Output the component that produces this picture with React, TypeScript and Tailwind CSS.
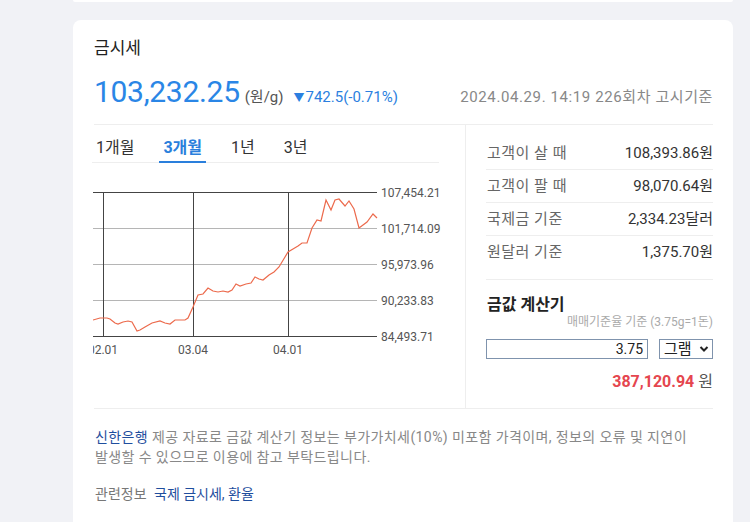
import React from "react";

const pts: [number, number][] = [
  [93, 319], [100, 317], [107, 317], [110, 318], [115, 322], [118, 323], [123, 321], [128, 320],
  [132, 321], [137, 330], [140, 329], [145, 326], [152, 322], [160, 320], [165, 322], [170, 323],
  [175, 319], [180, 319], [185, 319], [188, 317], [193, 306], [198, 294], [203, 293], [208, 287],
  [213, 290], [218, 291], [223, 290], [228, 291], [232, 289], [236, 283], [240, 285], [246, 283],
  [251, 282], [255, 276], [259, 278], [263, 279], [269, 274], [274, 271], [279, 266], [288, 251],
  [293, 248], [298, 245], [302, 242], [307, 242], [312, 227], [317, 219], [321, 220], [326, 199],
  [331, 209], [335, 199], [339, 198], [345, 205], [349, 200], [354, 208], [359, 227], [367, 221],
  [373, 213], [377, 217],
];

const rows = [
  { label: "고객이 살 때", value: "108,393.86원" },
  { label: "고객이 팔 때", value: "98,070.64원" },
  { label: "국제금 기준", value: "2,334.23달러" },
  { label: "원달러 기준", value: "1,375.70원" },
];

const gridY = [11, 47, 83, 119, 155];
const gridLabels = ["107,454.21", "101,714.09", "95,973.96", "90,233.83", "84,493.71"];
const xTicks = [
  { x: 10, label: "02.01" },
  { x: 100, label: "03.04" },
  { x: 195, label: "04.01" },
];

const Chart = () => {
  const line = pts.map(([x, y]) => `${x - 93},${y - 180}`).join(" ");
  return (
    <svg width="373" height="180" className="block mt-[18px] ml-[-1px]" style={{ overflow: "hidden" }}>
      {gridY.map((y, i) => (
        <line
          key={y}
          x1="0"
          x2="284"
          y1={y + 0.5}
          y2={y + 0.5}
          stroke={i === 0 || i === 4 ? "#444" : "#b5b5b5"}
          strokeWidth="1"
        />
      ))}
      {xTicks.map((t) => (
        <line key={t.x} x1={t.x + 0.5} x2={t.x + 0.5} y1="11" y2="155" stroke="#444" strokeWidth="1" />
      ))}
      <polyline points={line} fill="none" stroke="#ec6a4c" strokeWidth="1.2" />
      {gridLabels.map((l, i) => (
        <text key={l} x="288" y={gridY[i] + 4.5} fontSize="12" fill="#555" fontFamily="Roboto, sans-serif">
          {l}
        </text>
      ))}
      {xTicks.map((t) => (
        <text key={t.label} x={t.x} y="173" fontSize="12" fill="#555" textAnchor="middle" fontFamily="Roboto, sans-serif">
          {t.label}
        </text>
      ))}
    </svg>
  );
};

export default function App() {
  return (
    <div
      className="w-[750px] h-[522px] overflow-hidden bg-[#f1f2f6]"
      style={{ fontFamily: 'Roboto, "Noto Sans CJK KR", sans-serif' }}
    >
      <div className="ml-[73px] w-[660px] h-[2px] bg-white rounded-b-md" />
      <div className="ml-[73px] mt-[18px] w-[660px] h-[520px] bg-white rounded-lg pl-[21px] pr-[20px] pt-[16px]">
        <h1 className="text-[17px] leading-[24px] text-[#222]">금시세</h1>
        <div className="mt-[14px] flex items-baseline">
          <span className="text-[30px] leading-[36px] text-[#2a86e6] tracking-[-0.3px]">103,232.25</span>
          <span className="ml-[5px] text-[15px] text-[#555]">(원/g)</span>
          <span className="ml-[10px] text-[15px] text-[#2b7fe0]">
            <span className="text-[11px] mr-[1px]">▼</span>742.5(-0.71%)
          </span>
          <span className="ml-auto text-[15px] text-[#888] tracking-[0.6px]">2024.04.29. 14:19 226회차 고시기준</span>
        </div>
        <div className="mt-[14px] flex border-t border-[#eee]">
          <div className="w-[372px] border-r border-[#eee]">
            <div className="ml-[-2px] w-[347px] flex gap-[21px] pt-[11px] border-b border-[#eee]">
              <div className="px-[4px] pb-[2px] text-[16px] leading-[24px] text-[#333]">1개월</div>
              <div className="px-[4px] pb-[1px] text-[16px] leading-[24px] text-[#2a7fdc] font-bold border-b-2 border-[#2a7fdc] mb-[-1px]">
                3개월
              </div>
              <div className="px-[4px] pb-[2px] text-[16px] leading-[24px] text-[#333]">1년</div>
              <div className="px-[4px] pb-[2px] text-[16px] leading-[24px] text-[#333]">3년</div>
            </div>
            <Chart />
          </div>
          <div className="flex-1 pl-[20px]">
            <div className="pt-[12px] mb-[10px]">
              {rows.map((r, i) => (
                <div
                  key={r.label}
                  className={`h-[33px] flex items-center justify-between text-[15px] ${
                    i < rows.length - 1 ? "border-b border-[#eee]" : ""
                  }`}
                >
                  <span className="text-[#666] pl-[1px] tracking-[0.5px]">{r.label}</span>
                  <span className="text-[#333]">{r.value}</span>
                </div>
              ))}
            </div>
            <div className="border-t border-[#eee] pt-[14px] pb-[16px]">
              <div className="text-[16px] leading-[22px] font-bold text-[#222] pl-[1px]">금값 계산기</div>
              <div className="text-right text-[12px] leading-[14px] text-[#aaa] mt-[-1px]">
                매매기준율 기준 (3.75g=1돈)
              </div>
              <div className="mt-[10px] flex items-center">
                <div className="w-[162px] h-[20px] border border-[#7f93ad] text-right text-[14px] leading-[18px] pr-[4px] text-[#222]">
                  3.75
                </div>
                <div className="ml-auto w-[54px] h-[20px] border border-[#7f93ad] flex items-center justify-between pl-[4px] pr-[3px] text-[15px] text-[#222]">
                  <span>그램</span>
                  <svg width="10" height="8" viewBox="0 0 10 8">
                    <path d="M1.5 2 L5 5.5 L8.5 2" fill="none" stroke="#222" strokeWidth="2" />
                  </svg>
                </div>
              </div>
              <div className="mt-[13px] text-right text-[16px] leading-[20px]">
                <span className="font-bold text-[#e5464f]">387,120.94</span>
                <span className="ml-[4px] text-[#555]">원</span>
              </div>
            </div>
          </div>
        </div>
        <div className="border-t border-[#eee] pt-[18px] text-[14px] leading-[20px] text-[#888]">
          <p className="pl-[1px] tracking-[0.4px]">
            <span className="text-[#1f4e9e]">신한은행</span> 제공 자료로 금값 계산기 정보는 부가가치세(10%) 미포함 가격이며, 정보의 오류 및 지연이
            <br />
            발생할 수 있으므로 이용에 참고 부탁드립니다.
          </p>
          <p className="mt-[17px] pl-[1px] text-[#777]">
            관련정보 <span className="ml-[4px] text-[#1f4e9e]">국제 금시세, 환율</span>
          </p>
        </div>
      </div>
    </div>
  );
}
